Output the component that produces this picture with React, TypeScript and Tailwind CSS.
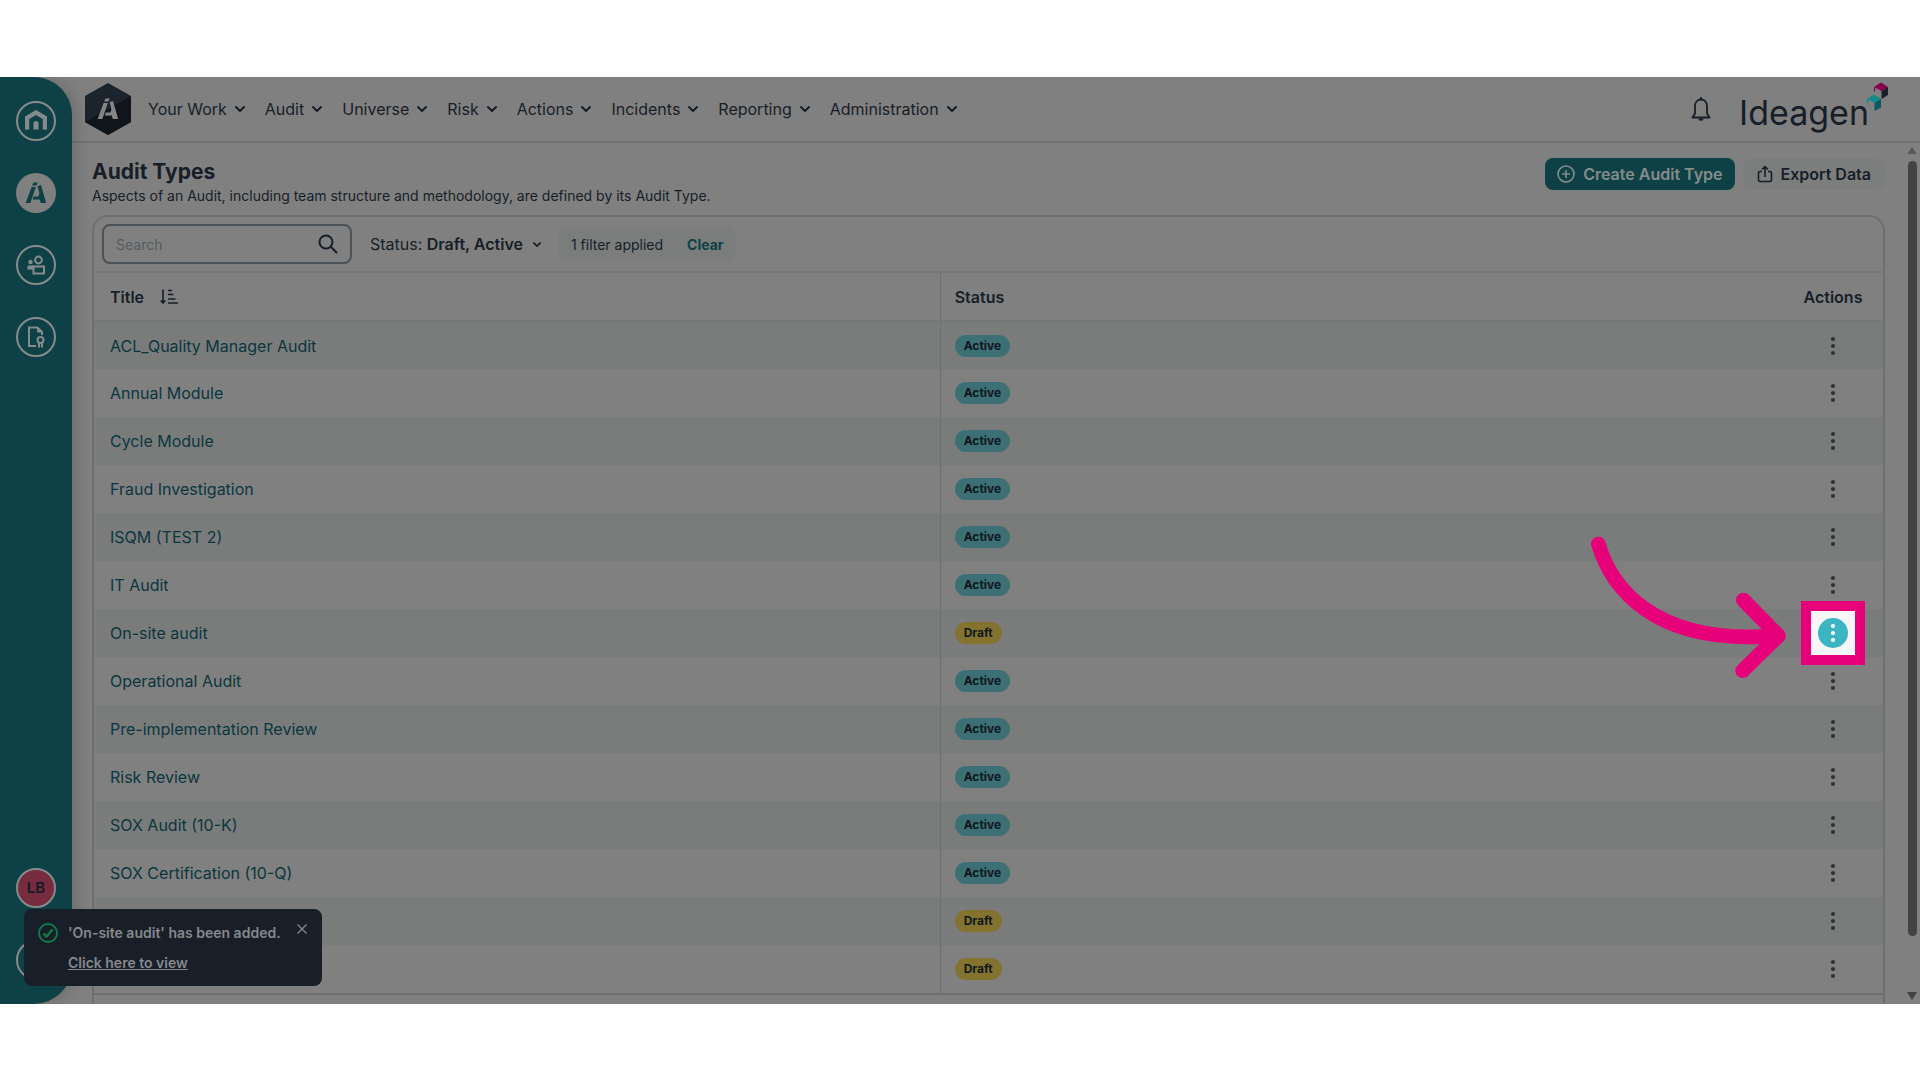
import React from "react";

const navItems = ["Your Work", "Audit", "Universe", "Risk", "Actions", "Incidents", "Reporting", "Administration"];

const rows = [
  { title: "ACL_Quality Manager Audit", status: "Active" },
  { title: "Annual Module", status: "Active" },
  { title: "Cycle Module", status: "Active" },
  { title: "Fraud Investigation", status: "Active" },
  { title: "ISQM (TEST 2)", status: "Active" },
  { title: "IT Audit", status: "Active" },
  { title: "On-site audit", status: "Draft", highlighted: true },
  { title: "Operational Audit", status: "Active" },
  { title: "Pre-implementation Review", status: "Active" },
  { title: "Risk Review", status: "Active" },
  { title: "SOX Audit (10-K)", status: "Active" },
  { title: "SOX Certification (10-Q)", status: "Active" },
  { title: "", status: "Draft" },
  { title: "", status: "Draft" },
];

function Chevron({ className }: { className: string }) {
  return (
    <svg className={className} viewBox="0 0 10 8" fill="none" stroke="currentColor" strokeWidth="2" strokeLinecap="round" strokeLinejoin="round" aria-hidden="true">
      <path d="M1 2 5 6 9 2" />
    </svg>
  );
}

function AuditMark({ className }: { className: string }) {
  return (
    <svg className={className} viewBox="0 0 22 24" fill="currentColor" aria-hidden="true">
      <path d="M8.400 1.500h4.400l-1.300 3H7.200z" />
      <path d="M6.600 6h4.200L5.400 22H.6z" />
      <path d="M12.600 5l3.400-1 5.200 18h-5.400l-1-3.400H7.600l1.200-3.200h4.600l1-3z" />
    </svg>
  );
}

function Dots({ className }: { className: string }) {
  return (
    <svg className={className} viewBox="0 0 6 20" fill="currentColor" aria-hidden="true">
      <circle cx="3" cy="3" r="2.1" />
      <circle cx="3" cy="10" r="2.1" />
      <circle cx="3" cy="17" r="2.1" />
    </svg>
  );
}

function Sidebar() {
  const ring = "flex size-10 items-center justify-center rounded-full border-2 border-[#858b8c] text-[#858b8c]";
  return (
    <aside className="relative z-10 flex w-[72px] shrink-0 flex-col items-center justify-between rounded-r-[38px] bg-[#0e4146] pt-6 pb-6 shadow-[4px_0_14px_rgba(0,0,0,0.16)]">
      <nav aria-label="Products" className="flex flex-col gap-8">
        <button type="button" aria-label="Home" className={ring}>
          <svg className="size-6 shrink-0" viewBox="0 0 24 24" fill="currentColor" aria-hidden="true">
            <path d="M1 20.500V7.500L12 1l11 6.500v13h-4.200V10L12 6 5.200 10v10.500z" />
            <path d="M9.500 20.500v-7.300L12 11.800l2.500 1.400v7.300z" />
          </svg>
        </button>
        <button type="button" aria-label="Internal Audit" className="flex size-10 items-center justify-center rounded-full bg-[#808080] text-[#0e4146]">
          <AuditMark className="h-6 w-[22px]" />
        </button>
        <button type="button" aria-label="Meetings" className={ring}>
          <svg className="size-5" viewBox="0 0 20 20" fill="none" stroke="currentColor" strokeWidth="2" aria-hidden="true">
            <circle cx="12.5" cy="5" r="3.4" />
            <circle cx="4.5" cy="7" r="2.2" fill="currentColor" stroke="none" />
            <path d="M1.500 10.500h6v4h-6z" fill="currentColor" stroke="none" />
            <path d="M7.500 11.500H18v7H7.500z" />
          </svg>
        </button>
        <button type="button" aria-label="Certificates" className={ring}>
          <svg className="h-[22px] w-5" viewBox="0 0 20 22" fill="none" stroke="currentColor" strokeWidth="2" aria-hidden="true">
            <path d="M10 20H3V1.500h8.500L16 6v3" />
            <path d="M11.500 1.500V6H16z" fill="currentColor" strokeWidth="1" />
            <circle cx="14.500" cy="14" r="3" />
            <path d="M13 17v4.500M16 17v4.500" />
          </svg>
        </button>
      </nav>
      <div className="flex flex-col gap-8">
        <button type="button" className="flex size-10 items-center justify-center rounded-full border-2 border-[#858b8c] bg-[#762b3f] text-[15px] font-semibold text-[#151b25]">LB</button>
        <button type="button" aria-label="Help" className={ring} />
      </div>
    </aside>
  );
}

function IdeagenLogo() {
  return (
    <a href="#" aria-label="Ideagen" className="flex items-center text-[#171e27]">
      <span className="pt-2 text-[34px] leading-10">Ideagen</span>
      <svg className="-ml-0.5 mb-6 h-[30px] w-[21px]" viewBox="0 0 21 30" aria-hidden="true">
        <path d="M7 5 14 .5 21 5l-6.500 4z" fill="#86004a" />
        <path d="M7 5l1.200.8v3L7 10z" fill="#86004a" />
        <path d="M14.500 9 21 5v8l-6.500 4z" fill="#1b1f2b" />
        <path d="M0 17l7-4.500 7 4.500-6.500 4z" fill="#13898b" />
        <path d="M0 17l1.200.8v3L0 22z" fill="#13898b" />
        <path d="M7.500 21 14 17v8.500L7.500 29z" fill="#075a60" />
      </svg>
    </a>
  );
}

function Header() {
  return (
    <header className="flex h-[66px] shrink-0 items-center border-b-2 border-[#717374] pr-8 pl-[13px]">
      <a href="#" aria-label="Internal Audit home" className="relative mr-[17px] flex h-[52px] w-[46px] items-center justify-center text-[#858585]">
        <svg className="absolute inset-0 size-full" viewBox="0 0 46 52" aria-hidden="true">
          <path d="M23 0 46 13v26L23 52 0 39V13z" fill="#1b232d" />
          <path d="M46 13v26L23 52 0 39z" fill="#10151c" />
        </svg>
        <AuditMark className="relative h-6 w-[22px]" />
      </a>
      <nav aria-label="Main" className="flex gap-5">
        {navItems.map((item) => (
          <button key={item} type="button" className="flex items-center gap-2 text-[16px] leading-6">
            {item}
            <Chevron className="h-2 w-2.5" />
          </button>
        ))}
      </nav>
      <div className="ml-auto flex items-center gap-7">
        <button type="button" aria-label="Notifications">
          <svg className="h-6 w-5" viewBox="0 0 20 24" fill="none" stroke="currentColor" strokeWidth="1.800" strokeLinejoin="round" aria-hidden="true">
            <path d="M1.500 20.500 4 16.500V9c0-4 2.500-6.500 6-6.500S16 5 16 9v7.500l2.500 4z" />
            <path d="M10 .500v2M8.500 22.500h3" strokeLinecap="round" />
          </svg>
        </button>
        <IdeagenLogo />
      </div>
    </header>
  );
}

function FilterBar() {
  return (
    <div className="flex h-14 items-center border-b-2 border-[#767878] pl-2">
      <div className="flex h-10 w-[250px] items-center rounded-lg border-2 border-[#4b5257] px-3">
        <input type="search" aria-label="Search" placeholder="Search" className="min-w-0 flex-1 bg-transparent text-[14px] outline-none placeholder:text-[#555b5f]" />
        <svg className="size-5" viewBox="0 0 20 20" fill="none" stroke="currentColor" strokeWidth="2" strokeLinecap="round" aria-hidden="true">
          <circle cx="8" cy="8" r="6.500" />
          <path d="m13 13 5.500 5.500" />
        </svg>
      </div>
      <button type="button" className="ml-[18px] flex items-center gap-2.5">
        <span>Status: <b className="font-semibold">Draft, Active</b></span>
        <Chevron className="h-[7px] w-2" />
      </button>
      <div className="ml-[18px] flex h-8 items-center gap-6 rounded-lg bg-[#7a7d7c] px-3 text-[14px]">
        <span>1 filter applied</span>
        <button type="button" className="font-bold text-[#0e4146]">Clear</button>
      </div>
    </div>
  );
}

function Highlight() {
  return (
    <div className="absolute top-1/2 left-1/2 z-10 flex size-16 -translate-1/2 items-center justify-center border-10 border-[#e6007a] bg-[#f5f6f8]">
      <svg className="pointer-events-none absolute -top-[76px] right-full mr-[21px] h-[150px] w-[200px] max-w-none" viewBox="90 105 600 450" fill="none" stroke="#e6007a" strokeWidth="44" strokeLinecap="round" strokeLinejoin="round" aria-hidden="true">
        <path d="M115 132C150 250 270 440 655 407" />
        <path d="M550 300 655 407 548 512" />
      </svg>
      <button type="button" aria-label="Actions for On-site audit" className="flex size-[30px] shrink-0 items-center justify-center rounded-full bg-[#3bb5c1] text-white">
        <Dots className="h-5 w-1.5" />
      </button>
    </div>
  );
}

function AuditTable() {
  return (
    <table className="w-full table-fixed border-collapse text-left">
      <thead>
        <tr className="h-12 border-b-2 border-[#767878]">
          <th scope="col" className="w-[47.300%] border-r border-[#6d7072] pl-4 font-semibold">
            <button type="button" className="flex items-center gap-4">
              Title
              <svg className="h-4 w-[18px]" viewBox="0 0 18 16" fill="none" stroke="currentColor" strokeWidth="1.600" aria-hidden="true">
                <path d="M3 .500V14M.700 11.500 3 14l2.300-2.500M8 1.500h4M8 5.500h5.500M8 10h7.500M8 14h10" />
              </svg>
            </button>
          </th>
          <th scope="col" className="pl-3.5 font-semibold">Status</th>
          <th scope="col" className="w-[100px] text-center font-semibold">Actions</th>
        </tr>
      </thead>
      <tbody>
        {rows.map((row, i) => (
          <tr key={i} className="h-12 odd:bg-[#7a7c7b]">
            <td className="border-r border-[#6d7072] pl-4">
              <a href="#" className="block w-fit leading-6 text-[#0b363e]">{row.title}</a>
            </td>
            <td className="pl-3.5">
              <span className={row.status === "Active" ? "flex h-[22px] w-fit items-center rounded-full bg-[#3c7074] px-[9px] text-[12px] font-bold text-[#10161d]" : "flex h-[22px] w-fit items-center rounded-full bg-[#84722f] px-[9px] text-[12px] font-bold text-[#10161d]"}>
                {row.status}
              </span>
            </td>
            <td className="relative">
              {row.highlighted ? (
                <Highlight />
              ) : (
                <button type="button" aria-label="Row actions" className="mx-auto block text-[#2b333d]">
                  <Dots className="h-5 w-1.5" />
                </button>
              )}
            </td>
          </tr>
        ))}
      </tbody>
    </table>
  );
}

function Toast() {
  return (
    <div role="status" className="absolute bottom-[18px] left-6 z-20 flex h-[77px] items-start rounded-lg bg-[#181f29] pt-3.5 pr-[15px] pl-3.5 text-[14px] font-semibold text-[#85888c]">
      <svg className="size-5 text-[#0f7c4c]" viewBox="0 0 20 20" fill="none" stroke="currentColor" strokeWidth="1.800" aria-hidden="true">
        <circle cx="10" cy="10" r="9" />
        <path d="m5.500 10.500 3 3 6-7" strokeWidth="2.400" />
      </svg>
      <div className="ml-2.5 flex flex-col gap-2.5 leading-5">
        <span>'On-site audit' has been added.</span>
        <a href="#" className="underline">Click here to view</a>
      </div>
      <button type="button" aria-label="Dismiss" className="mt-px ml-4">
        <svg className="size-2.5" viewBox="0 0 10 10" stroke="currentColor" strokeWidth="1.400" aria-hidden="true">
          <path d="m.500.500 9 9M9.500.500l-9 9" />
        </svg>
      </button>
    </div>
  );
}

export default function App() {
  return (
    <div className="h-screen bg-white pt-[77px] pb-[76px] font-['Inter',sans-serif] text-[16px] text-[#171e27]">
      <div className="relative flex h-full overflow-hidden bg-[#808080]">
        <Sidebar />
        <div className="flex min-w-0 flex-1 flex-col">
          <Header />
          <div className="flex min-h-0 flex-1">
            <main className="min-w-0 flex-1 overflow-hidden pr-[19px] pl-5">
              <div className="flex h-[72px] items-start justify-between pt-[15px]">
                <div>
                  <h1 className="text-[21px] leading-7 font-bold">Audit Types</h1>
                  <p className="text-[14px] leading-5">Aspects of an Audit, including team structure and methodology, are defined by its Audit Type.</p>
                </div>
                <div className="flex gap-2">
                  <button type="button" className="flex h-8 items-center gap-2 rounded-lg bg-[#0e4146] px-3 font-semibold text-[#858b8c]">
                    <svg className="size-[18px]" viewBox="0 0 18 18" fill="none" stroke="currentColor" strokeWidth="1.600" aria-hidden="true">
                      <circle cx="9" cy="9" r="8" />
                      <path d="M9 5v8M5 9h8" />
                    </svg>
                    Create Audit Type
                  </button>
                  <button type="button" className="flex h-8 items-center gap-2 rounded-lg bg-[#7c7e7e] px-3.5 font-semibold">
                    <svg className="h-[18px] w-4" viewBox="0 0 16 18" fill="none" stroke="currentColor" strokeWidth="1.600" strokeLinejoin="round" aria-hidden="true">
                      <path d="M5 6.500H3a1.500 1.500 0 0 0-1.500 1.500v7A1.500 1.500 0 0 0 3 16.500h10a1.500 1.500 0 0 0 1.500-1.500V8A1.500 1.500 0 0 0 13 6.500h-2M8 12V1.500M5 4.500l3-3 3 3" />
                    </svg>
                    Export Data
                  </button>
                </div>
              </div>
              <section className="min-h-[800px] rounded-t-2xl border-2 border-[#6d7072]">
                <FilterBar />
                <AuditTable />
                <div className="border-t-2 border-[#6d7072]" />
              </section>
            </main>
            <div className="flex w-4 flex-col items-center gap-1.5 py-1 text-[#434343]" aria-hidden="true">
              <svg className="h-2 w-2.5" viewBox="0 0 10 8" fill="#5a5a5a"><path d="M5 0 10 7H0z" /></svg>
              <div className="w-[9px] flex-1 rounded-full bg-[#434343]" />
              <svg className="mt-[50px] h-2 w-2.5" viewBox="0 0 10 8" fill="currentColor"><path d="M0 0h10L5 8z" /></svg>
            </div>
          </div>
        </div>
        <Toast />
      </div>
    </div>
  );
}
